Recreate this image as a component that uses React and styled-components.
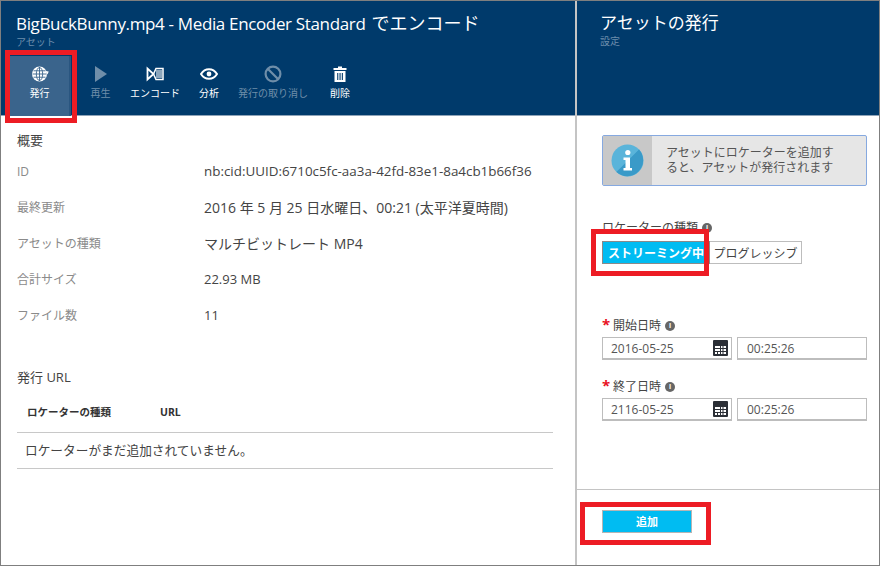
import React from "react";
import styled, { createGlobalStyle } from "styled-components";

const font = `"Open Sans", "Noto Sans CJK JP", sans-serif`;

const GlobalStyle = createGlobalStyle`
  html, body { margin: 0; padding: 0; background: #fff; }
  * { box-sizing: border-box; }
`;

const Frame = styled.div`
  position: relative;
  display: grid;
  grid-template-columns: 574px 1fr;
  width: 880px;
  height: 566px;
  border: 1px solid #7f7f7f;
  font-family: ${font};
  overflow: hidden;
`;

const Panel = styled.section`
  display: flex;
  flex-direction: column;
  min-width: 0;
`;

const SidePanel = styled(Panel)`
  border-left: 2px solid #c4c4c4;
`;

const Header = styled.header`
  flex: none;
  height: 115px;
  padding-top: 10px;
  background: #003a6b;
  border-bottom: 1px solid #8ea3b8;
`;

const Title = styled.h1`
  margin: 0 0 0 15px;
  font-size: 17px;
  font-weight: 400;
  line-height: 24px;
  letter-spacing: -0.35px;
  color: #fff;
  white-space: nowrap;

  span {
    margin-left: 2px;
    font-size: 18px;
    letter-spacing: 0;
  }
`;

const Subtitle = styled.div`
  margin-left: 15px;
  font-size: 10px;
  line-height: 12px;
  color: #6d8dab;
`;

const SideTitle = styled(Title)`
  margin-left: 23px;
  letter-spacing: 0;
`;

const SideSubtitle = styled(Subtitle)`
  margin-left: 23px;
`;

const Toolbar = styled.div`
  display: flex;
  height: 60px;
  margin: 8px 0 0 9px;
`;

const Tool = styled.div`
  display: flex;
  flex-direction: column;
  align-items: center;
  flex: none;
  width: ${({ $w }) => $w}px;
  padding-top: 9px;
  background: ${({ $active }) => ($active ? "#3a648c" : "transparent")};
  border-right: ${({ $active }) => ($active ? "2px solid #2a5680" : "none")};
  color: ${({ $off }) => ($off ? "#6f8ea9" : "#fff")};
  font-size: 10px;
  line-height: 12px;
  white-space: nowrap;

  svg {
    display: block;
    width: 18px;
    height: 18px;
    margin-bottom: 4px;
  }
`;

const Content = styled.div`
  flex: 1;
  padding: 16px 22px 0 16px;
`;

const SectionTitle = styled.h2`
  margin: 0;
  font-size: 13px;
  font-weight: 400;
  line-height: 16px;
  color: #444;
`;

const Facts = styled.dl`
  display: grid;
  grid-template-columns: 187px 1fr;
  grid-auto-rows: 36px;
  align-items: center;
  margin: 5px 0 36px;
`;

const FactLabel = styled.dt`
  font-size: 12px;
  color: #8a8a8a;
`;

const FactValue = styled.dd`
  margin: 0;
  font-size: ${({ $size }) => $size}px;
  color: #444;
  white-space: nowrap;
`;

const UrlTable = styled.div`
  margin-top: 12px;
  font-size: 13px;
`;

const UrlHead = styled.div`
  display: grid;
  grid-template-columns: 133px 1fr;
  height: 36px;
  padding: 8px 0 0 10px;
  border-bottom: 1px solid #c8c8c8;
  font-size: 10.5px;
  line-height: 14px;
  font-weight: 700;
  color: #333;
`;

const UrlEmpty = styled.div`
  height: 36px;
  padding-left: 8px;
  border-bottom: 1px solid #c8c8c8;
  font-size: 12.7px;
  line-height: 35px;
  color: #444;
`;

const SideBody = styled.div`
  flex: 1;
  padding: 19px 12px 0 25px;
`;

const Notice = styled.div`
  display: flex;
  height: 51px;
  border: 1px solid #86a9e0;
  border-radius: 2px;
  background: #e6e6e6;
`;

const NoticeIcon = styled.div`
  display: flex;
  align-items: center;
  justify-content: center;
  flex: none;
  width: 49px;
  background: #c8c8c8;
`;

const NoticeText = styled.div`
  padding: 9px 0 0 14px;
  font-size: 12px;
  line-height: 15px;
  color: #555;
  white-space: nowrap;
`;

const FieldLabel = styled.div`
  display: flex;
  align-items: center;
  gap: 3px;
  font-size: 12px;
  line-height: 16px;
  color: #444;
`;

const TypeLabel = styled(FieldLabel)`
  margin-top: 34px;
`;

const Star = styled.span`
  align-self: flex-start;
  width: 8px;
  color: #e81123;
  font-size: 15px;
  font-weight: 700;
  line-height: 12px;
`;

const Hint = styled.span`
  display: inline-flex;
  align-items: center;
  justify-content: center;
  width: 10px;
  height: 10px;
  margin-left: 1px;
  border-radius: 50%;
  background: #666;
  color: #fff;
  font-size: 7px;
  font-weight: 700;
  line-height: 10px;
`;

const Segments = styled.div`
  display: flex;
  height: 23px;
  margin-top: 5px;
`;

const Segment = styled.div`
  display: flex;
  align-items: center;
  justify-content: center;
  width: ${({ $w }) => $w}px;
  border: 1px solid ${({ $on }) => ($on ? "#8a8a8a" : "#bdbdbd")};
  border-left-width: ${({ $on }) => ($on ? 1 : 0)}px;
  background: ${({ $on }) => ($on ? "#00bcf2" : "#fff")};
  color: ${({ $on }) => ($on ? "#fff" : "#444")};
  font-size: 12px;
  font-weight: ${({ $on }) => ($on ? 700 : 400)};
  white-space: nowrap;
`;

const DateField = styled.div`
  margin-top: ${({ $mt }) => $mt}px;
`;

const InputRow = styled.div`
  display: grid;
  grid-template-columns: 130px 130px;
  gap: 5px;
  margin-top: 3px;
`;

const Input = styled.div`
  display: flex;
  align-items: center;
  justify-content: space-between;
  height: 23px;
  padding: 0 3px 0 ${({ $pad }) => $pad}px;
  border: 1px solid #bdbdbd;
  border-bottom-width: 2px;
  font-size: 12px;
  color: #555;
`;

const Footer = styled.footer`
  flex: none;
  height: 76px;
  padding: 20px 0 0 25px;
  border-top: 1px solid #c4c4c4;
`;

const AddButton = styled.div`
  width: 90px;
  height: 23px;
  border: 1px solid #b5b5b5;
  background: #00bcf2;
  color: #fff;
  font-size: 11px;
  font-weight: 700;
  line-height: 21px;
  text-align: center;
`;

const Mark = styled.div`
  position: absolute;
  left: ${({ $x }) => $x}px;
  top: ${({ $y }) => $y}px;
  width: ${({ $w }) => $w}px;
  height: ${({ $h }) => $h}px;
  border: 5px solid #ed1c24;
  pointer-events: none;
`;

const GlobeIcon = () => (
  <svg viewBox="0 0 18 18" fill="none" stroke="currentColor">
    <circle cx="8.5" cy="9" r="7.5" fill="currentColor" stroke="none" />
    <ellipse cx="8.5" cy="9" rx="3.2" ry="6.5" stroke="#3a648c" strokeWidth="0.9" />
    <path d="M1.5 9h14M2.500 5.800h12M2.500 12.200h12M8.500 2v14" stroke="#3a648c" strokeWidth="0.9" />
    <path d="M14.500 6l3.200.6-1.200 3z" fill="currentColor" stroke="none" />
  </svg>
);

const PlayIcon = () => (
  <svg viewBox="0 0 18 18" fill="currentColor">
    <path d="M3 1v16L15 9z" />
  </svg>
);

const EncodeIcon = () => (
  <svg viewBox="0 0 18 18" fill="none" stroke="currentColor">
    <path d="M1.500 3.500v11L7.500 9z" strokeWidth="1.800" strokeLinejoin="miter" />
    <path d="M10 3.500h7v11h-7L7.500 9z" strokeWidth="1.500" />
    <path d="M11 5v8M13 5v8M15 5v8" strokeWidth="1.100" />
  </svg>
);

const EyeIcon = () => (
  <svg viewBox="0 0 18 18" fill="none" stroke="currentColor">
    <path d="M1 9c2-3.200 4.800-4.800 8-4.800s6 1.600 8 4.800c-2 3.200-4.800 4.800-8 4.800S3 12.200 1 9z" strokeWidth="2" />
    <circle cx="9" cy="9" r="2.400" fill="currentColor" stroke="none" />
  </svg>
);

const BanIcon = () => (
  <svg viewBox="0 0 18 18" fill="none" stroke="currentColor" strokeWidth="2.200">
    <circle cx="9" cy="9" r="7.400" />
    <path d="M4 4l10 10" />
  </svg>
);

const TrashIcon = () => (
  <svg viewBox="0 0 18 18" fill="currentColor">
    <path d="M7 1.500h4V3h4.500v2h-13V3H7z" />
    <path d="M3.500 6h11v11h-11zM6.200 8v7h1.100V8zm2.300 0v7h1.100V8zm2.300 0v7h1.100V8z" fillRule="evenodd" />
  </svg>
);

const InfoBadge = () => (
  <svg width="33" height="33" viewBox="0 0 33 33">
    <circle cx="16.500" cy="16.500" r="16" fill="#5ab4da" />
    <path d="M28 5.400A16 16 0 0 1 5.400 28z" fill="#3a9ac8" />
    <circle cx="16.800" cy="8.500" r="2.600" fill="#fff" />
    <path d="M12.500 13.500h6.500V24h2v2.500h-8.500V24h2v-8h-2z" fill="#fff" />
  </svg>
);

const CalendarIcon = () => (
  <svg width="15" height="16" viewBox="0 0 15 16">
    <rect width="15" height="16" rx="1" fill="#2b2f36" />
    <path
      d="M2 6h5v2H2zM8 6h1.500v2H8zM10.500 6H13v2h-2.500zM2 9h5v2H2zM8 9h1.500v2H8zM10.500 9H13v2h-2.500zM2 12h2v2H2zM5 12h2v2H5zM8 12h1.500v2H8zM10.500 12H13v2h-2.500z"
      fill="#fff"
    />
  </svg>
);

const tools = [
  { label: "発行", w: 61, Icon: GlobeIcon, active: true },
  { label: "再生", w: 59, Icon: PlayIcon, off: true },
  { label: "エンコード", w: 50, Icon: EncodeIcon },
  { label: "分析", w: 58, Icon: EyeIcon },
  { label: "発行の取り消し", w: 70, Icon: BanIcon, off: true },
  { label: "削除", w: 64, Icon: TrashIcon },
];

const facts = [
  ["ID", "nb:cid:UUID:6710c5fc-aa3a-42fd-83e1-8a4cb1b66f36", 13.4],
  ["最終更新", "2016 年 5 月 25 日水曜日、00:21 (太平洋夏時間)", 14],
  ["アセットの種類", "マルチビットレート MP4", 14],
  ["合計サイズ", "22.93 MB", 13],
  ["ファイル数", "11", 13],
];

const ranges = [
  { label: "開始日時", date: "2016-05-25", mt: 54 },
  { label: "終了日時", date: "2116-05-25", mt: 19 },
];

export default function App() {
  return (
    <Frame>
      <GlobalStyle />
      <Panel>
        <Header>
          <Title>
            BigBuckBunny.mp4 - Media Encoder Standard <span>でエンコード</span>
          </Title>
          <Subtitle>アセット</Subtitle>
          <Toolbar>
            {tools.map(({ label, w, Icon, active, off }) => (
              <Tool key={label} $w={w} $active={active} $off={off}>
                <Icon />
                {label}
              </Tool>
            ))}
          </Toolbar>
        </Header>
        <Content>
          <SectionTitle>概要</SectionTitle>
          <Facts>
            {facts.map(([label, value, size]) => (
              <React.Fragment key={label}>
                <FactLabel>{label}</FactLabel>
                <FactValue $size={size}>{value}</FactValue>
              </React.Fragment>
            ))}
          </Facts>
          <SectionTitle>発行 URL</SectionTitle>
          <UrlTable>
            <UrlHead>
              <span>ロケーターの種類</span>
              <span>URL</span>
            </UrlHead>
            <UrlEmpty>ロケーターがまだ追加されていません。</UrlEmpty>
          </UrlTable>
        </Content>
      </Panel>
      <SidePanel>
        <Header>
          <SideTitle>アセットの発行</SideTitle>
          <SideSubtitle>設定</SideSubtitle>
        </Header>
        <SideBody>
          <Notice>
            <NoticeIcon>
              <InfoBadge />
            </NoticeIcon>
            <NoticeText>
              アセットにロケーターを追加す
              <br />
              ると、アセットが発行されます
            </NoticeText>
          </Notice>
          <TypeLabel>
            ロケーターの種類 <Hint>i</Hint>
          </TypeLabel>
          <Segments>
            <Segment $on $w={108}>ストリーミング中</Segment>
            <Segment $w={92}>プログレッシブ</Segment>
          </Segments>
          {ranges.map(({ label, date, mt }) => (
            <DateField key={label} $mt={mt}>
              <FieldLabel>
                <Star>*</Star>
                {label}
                <Hint>i</Hint>
              </FieldLabel>
              <InputRow>
                <Input $pad={8}>
                  {date}
                  <CalendarIcon />
                </Input>
                <Input $pad={9}>00:25:26</Input>
              </InputRow>
            </DateField>
          ))}
        </SideBody>
        <Footer>
          <AddButton>追加</AddButton>
        </Footer>
      </SidePanel>
      <Mark $x={4} $y={49} $w={72} $h={73} />
      <Mark $x={590} $y={228} $w={118} $h={47} />
      <Mark $x={579} $y={501} $w={131} $h={43} />
    </Frame>
  );
}
